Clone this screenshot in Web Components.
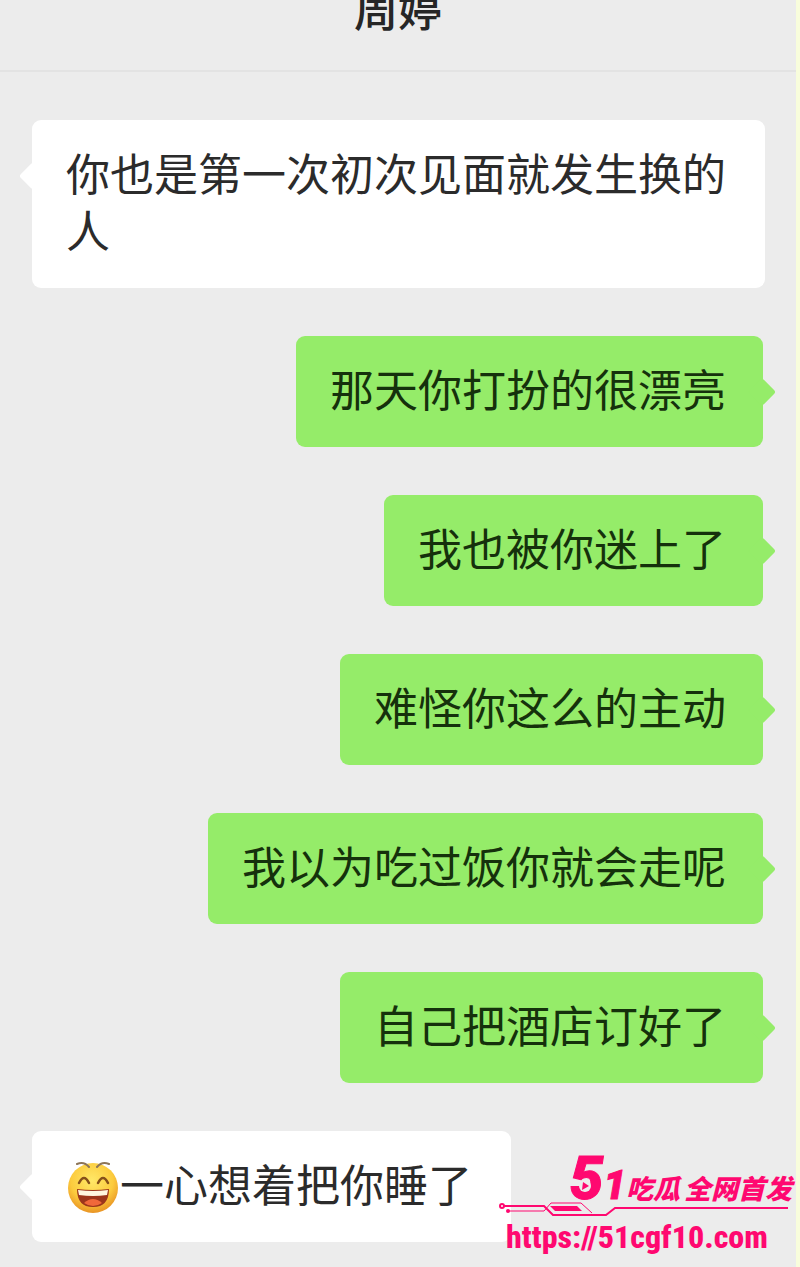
<!DOCTYPE html>
<html lang="zh-CN">
<head>
<meta charset="utf-8">
<meta name="viewport" content="width=device-width, initial-scale=1">
<title>周婷</title>
<style>
body {
  margin: 0;
  background: #ececec;
  font-family: "Liberation Sans", "Noto Sans CJK SC", sans-serif;
}
</style>
</head>
<body>

<chat-screen>
  <chat-header slot="header">周婷</chat-header>
  <chat-message from="them">你也是第一次初次见面就发生换的人</chat-message>
  <chat-message from="me">那天你打扮的很漂亮</chat-message>
  <chat-message from="me">我也被你迷上了</chat-message>
  <chat-message from="me">难怪你这么的主动</chat-message>
  <chat-message from="me">我以为吃过饭你就会走呢</chat-message>
  <chat-message from="me">自己把酒店订好了</chat-message>
  <chat-message from="them"><laugh-emoji></laugh-emoji>一心想着把你睡了</chat-message>
  <site-mark slot="overlay" href="https://51cgf10.com">https://51cgf10.com</site-mark>
</chat-screen>

<script>
(function() {

/**
 * Base class, renders the static template of its subclass into an open root.
 */
class TemplateElement extends HTMLElement {
  constructor() {
    super();
    const t = document.createElement('template');
    t.innerHTML = this.constructor.template;
    this.attachShadow({mode: 'open'}).appendChild(t.content.cloneNode(true));
  }
}

class ChatScreenElement extends TemplateElement {
  static get template() {
    return `
<style>
:host {
  display: flex;
  flex-direction: column;
  position: relative;
  box-sizing: border-box;
  min-height: 100vh;
  overflow: hidden;
  border-right: 4px solid #f8fddc;
}
main {
  display: flex;
  flex-direction: column;
  gap: 48px;
  padding: 48px 31px 24px 32px;
}
</style>
<slot name="header"></slot>
<main><slot></slot></main>
<slot name="overlay"></slot>
`;
  }
}

class ChatHeaderElement extends TemplateElement {
  static get template() {
    return `
<style>
:host {
  display: block;
  padding-bottom: 46px;
  border-bottom: 2px solid #e3e3e3;
}
h1 {
  margin: 0;
  color: #262626;
  font-size: 44px;
  font-weight: 500;
  line-height: 24px;
  text-align: center;
}
</style>
<h1><slot></slot></h1>
`;
  }
}

class ChatMessageElement extends TemplateElement {
  static get template() {
    return `
<style>
:host {
  --bubble: #fff;
  display: flex;
  color: #2b2b2b;
}
:host([from="me"]) {
  --bubble: #95ec69;
  justify-content: flex-end;
  padding-right: 2px;
  color: #15310c;
}
p {
  position: relative;
  margin: 0;
  padding: 27px 39px 27px 34px;
  border-radius: 9px;
  background: var(--bubble);
  font-size: 44px;
  line-height: 57px;
}
:host([from="me"]) p {
  padding: 27px 37px 27px 34px;
}
/* tail, a turned square half hidden by the bubble */
p::before {
  content: "";
  position: absolute;
  top: 46px;
  left: -9px;
  width: 20px;
  height: 20px;
  border-radius: 3px;
  background: var(--bubble);
  transform: rotate(45deg);
}
:host([from="me"]) p::before {
  left: auto;
  right: -9px;
}
</style>
<p><slot></slot></p>
`;
  }
}

class LaughEmojiElement extends TemplateElement {
  static get template() {
    return `
<style>
:host {
  display: inline-block;
  width: 54px;
  height: 54px;
  vertical-align: -12px;
}
svg {
  display: block;
}
</style>
<svg viewBox="0 0 54 54" width="54" height="54" role="img" aria-label="笑">
  <defs>
    <radialGradient id="face" cx="0.48" cy="0.35" r="0.65">
      <stop offset="0" stop-color="#ffe868"/>
      <stop offset="0.65" stop-color="#fccb3d"/>
      <stop offset="1" stop-color="#e99424"/>
    </radialGradient>
  </defs>
  <circle cx="27" cy="28" r="25" fill="url(#face)"/>
  <g fill="none" stroke-linecap="round">
    <path d="M11 4q7-3 12 3M43 4q-7-3-12 3" stroke="#8d7558" stroke-width="2"/>
    <path d="M13 23q5-10 10 0M32 23q5-10 10 0" stroke="#86501a" stroke-width="2.5"/>
  </g>
  <path d="M11 29q16 2 32 0q0 18-16 18T11 29z" fill="#9c351b"/>
  <path d="M12 30q15 2 30 0l-1 5q-14 2-28 0z" fill="#fff6df"/>
  <path d="M18 43q9-8 18 0q-9 6-18 0z" fill="#f0683a"/>
</svg>
`;
  }
}

class SiteMarkElement extends TemplateElement {
  static get template() {
    return `
<style>
:host {
  position: absolute;
  right: 0;
  bottom: 10px;
  width: 298px;
  color: #ff0870;
}
.brand {
  display: flex;
  align-items: baseline;
  justify-content: flex-end;
  height: 44px;
  padding-right: 4px;
  font-style: italic;
  font-weight: 900;
  line-height: 44px;
  white-space: nowrap;
}
.five,
.one {
  position: relative;
  font-family: Roboto, sans-serif;
  -webkit-text-stroke: 1px currentColor;
}
.five {
  font-size: 60px;
}
.one {
  font-size: 40px;
}
/* play button in the bowl of the 5 */
.five svg {
  position: absolute;
  left: 8px;
  bottom: 8px;
}
.cn {
  font-size: 27px;
}
.gap {
  margin-left: 4px;
}
.circuit {
  display: block;
}
a {
  display: block;
  padding-left: 8px;
  color: inherit;
  font-family: "Roboto Condensed", "Liberation Sans Narrow", "Liberation Sans", sans-serif;
  font-size: 32px;
  font-weight: 800;
  line-height: 40px;
  text-decoration: none;
}
</style>
<div class="brand">
  <span class="five">5<svg viewBox="0 0 14 14" width="14" height="14"><circle cx="7" cy="7" r="6" fill="#ececec"/><path d="M5 3l6 4-7 4z" fill="currentColor"/></svg></span>
  <span class="one">1</span>
  <span class="cn">吃瓜</span>
  <span class="cn gap">全网首发</span>
</div>
<svg class="circuit" viewBox="0 0 298 16" width="298" height="16" fill="none" stroke="currentColor">
  <circle cx="4" cy="5" r="2" stroke-width="2"/>
  <path d="M6 5h40l9 9h53l9-7h173" stroke-width="2"/>
  <path d="M11 10h35l7-8h30l11 10" stroke-width="1"/>
  <circle cx="10" cy="10" r="2" fill="currentColor" stroke="none"/>
  <path d="M52 5h27l5 5H57z" fill="currentColor" stroke="none"/>
</svg>
<a><slot></slot></a>
`;
  }

  connectedCallback() {
    this.shadowRoot.querySelector('a').href = this.getAttribute('href');
  }
}

customElements.define('chat-screen', ChatScreenElement);
customElements.define('chat-header', ChatHeaderElement);
customElements.define('chat-message', ChatMessageElement);
customElements.define('laugh-emoji', LaughEmojiElement);
customElements.define('site-mark', SiteMarkElement);

}());
</script>
</body>
</html>
